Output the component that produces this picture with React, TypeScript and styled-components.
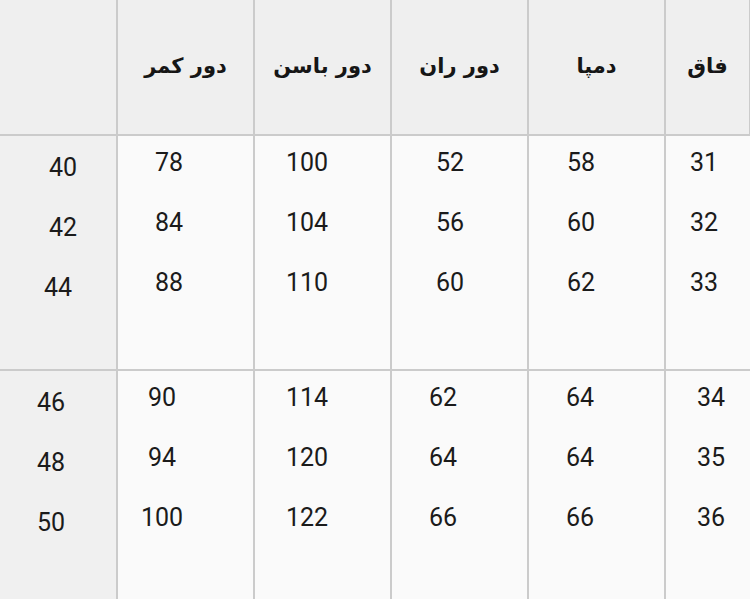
import styled, { createGlobalStyle } from 'styled-components';

const GlobalStyle = createGlobalStyle`
  html, body {
    margin: 0;
    padding: 0;
    background: #fafafa;
    overflow: hidden;
  }
`;

const Table = styled.div`
  display: grid;
  grid-template-columns: 118px repeat(4, 137px) 1fr;
  grid-template-rows: 136px 235px 235px;
  width: 750px;
  height: 599px;
  overflow: hidden;
  background: #fafafa;
`;

const HeadCell = styled.div`
  display: flex;
  align-items: center;
  justify-content: center;
  background: #efefef;
  border-right: 2px solid #cbcbcb;
  border-bottom: 2px solid #cbcbcb;
  font-family: 'DejaVu Sans', 'Noto Sans', sans-serif;
  font-weight: bold;
  font-size: 21px;
  color: #161616;
  direction: rtl;
  padding-bottom: 2px;
  &:last-child {
    border-right: none;
    justify-content: flex-start;
    padding-left: 31px;
  }
`;

const BodyCell = styled.div<{ $side?: boolean; $top: number }>`
  display: flex;
  flex-direction: column;
  gap: 30px;
  padding-top: ${({ $top }) => $top}px;
  background: ${({ $side }) => ($side ? '#f0f0f0' : '#fafafa')};
  border-right: 2px solid #cbcbcb;
  border-bottom: 2px solid #cbcbcb;
  &:nth-child(6n) {
    border-right: none;
  }
`;

const Value = styled.div<{ $center: number }>`
  width: 80px;
  margin-left: ${({ $center }) => $center - 40}px;
  height: 30px;
  line-height: 30px;
  text-align: center;
  font-family: Roboto, 'Liberation Sans', sans-serif;
  font-size: 25px;
  color: #1b1b1b;
`;

const headers = ['', 'دور کمر', 'دور باسن', 'دور ران', 'دمپا', 'فاق'];

type Column = { center: number; values: [string, number?][] };
type Group = { columns: Column[] };

const groups: Group[] = [
  {
    columns: [
      { center: 63, values: [['40'], ['42'], ['44', -5]] },
      { center: 51, values: [['78'], ['84'], ['88']] },
      { center: 52, values: [['100'], ['104'], ['110']] },
      { center: 58, values: [['52'], ['56'], ['60']] },
      { center: 52, values: [['58'], ['60'], ['62']] },
      { center: 38, values: [['31'], ['32'], ['33']] },
    ],
  },
  {
    columns: [
      { center: 51, values: [['46'], ['48'], ['50']] },
      { center: 44, values: [['90'], ['94'], ['100']] },
      { center: 52, values: [['114'], ['120'], ['122']] },
      { center: 51, values: [['62'], ['64'], ['66']] },
      { center: 51, values: [['64'], ['64'], ['66']] },
      { center: 45, values: [['34'], ['35'], ['36']] },
    ],
  },
];

export default function App() {
  return (
    <>
      <GlobalStyle />
      <Table>
        {headers.map((h, i) => (
          <HeadCell key={i}>{h}</HeadCell>
        ))}
        {groups.map((g, gi) =>
          g.columns.map((col, ci) => (
            <BodyCell key={`${gi}-${ci}`} $side={ci === 0} $top={ci === 0 ? 17 : 12}>
              {col.values.map(([v, dx = 0], vi) => (
                <Value key={vi} $center={col.center + dx}>
                  {v}
                </Value>
              ))}
            </BodyCell>
          )),
        )}
      </Table>
    </>
  );
}
